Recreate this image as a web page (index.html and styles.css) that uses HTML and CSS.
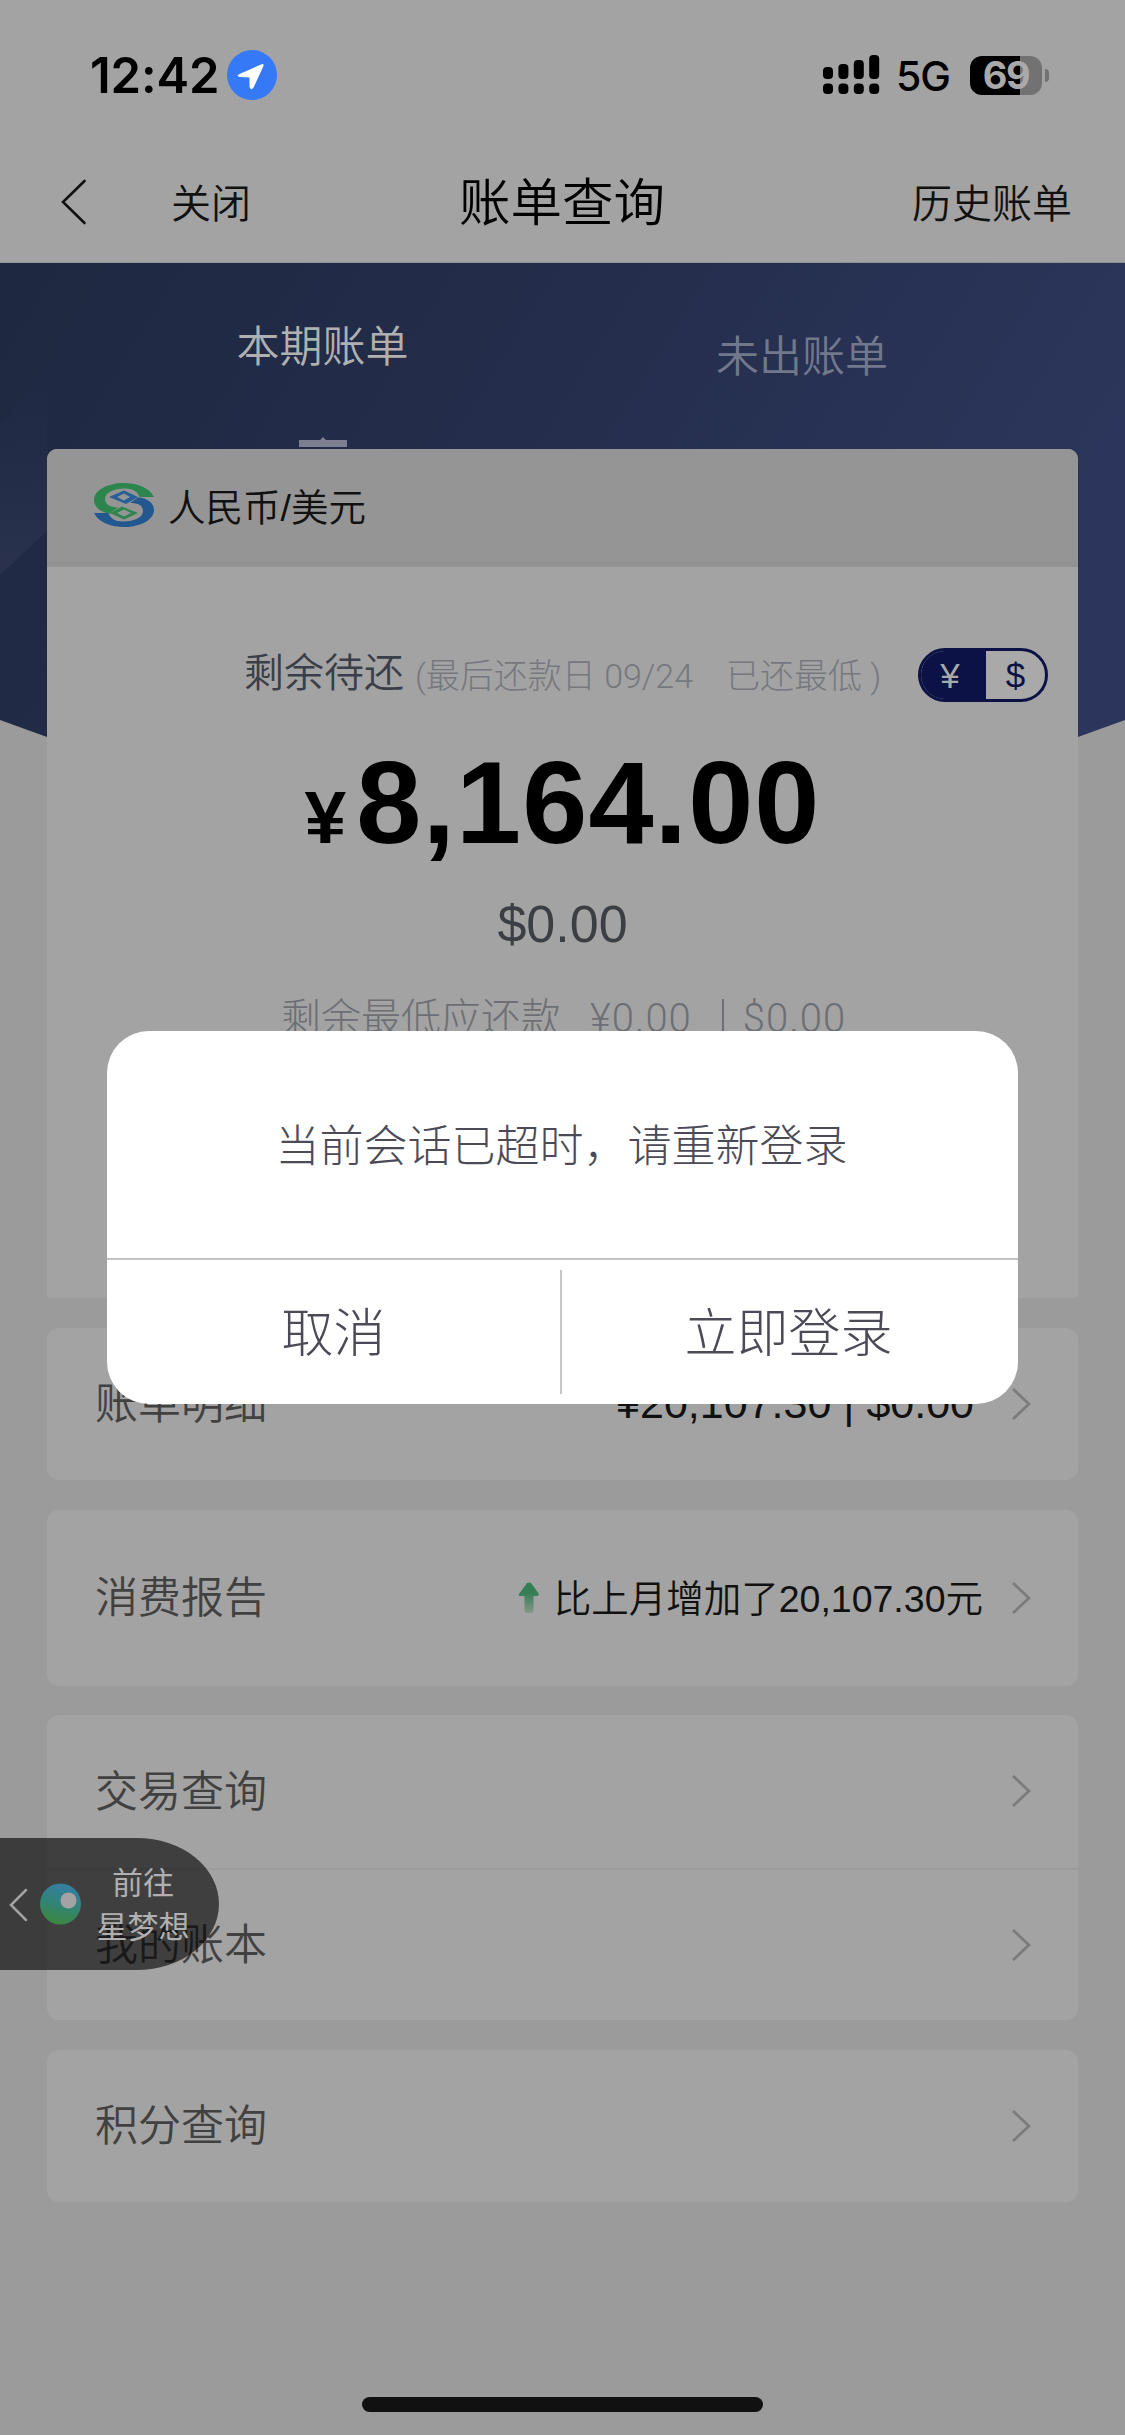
FILE: index.html
```html
<!DOCTYPE html>
<html lang="zh-CN">
<head>
<meta charset="utf-8">
<title>账单查询</title>
<link rel="stylesheet" href="styles.css">
</head>
<body>
<div class="screen">
  <div class="statusbar">
    <span class="time">12:42</span>
    <svg class="location" width="50" height="50" viewBox="0 0 50 50"><circle cx="25" cy="25" r="25" fill="#3579f6"/><path d="M12.5 24 34 14.500Q37.500 13 36.300 16.500L26.500 37.500Q24 41 22.500 37L22.500 27.500 13 27Q8.500 26 12.500 24Z" fill="#fff"/></svg>
    <svg class="signal" width="57" height="40" viewBox="0 0 57 40"><g fill="#000"><rect x="0" y="12" width="10" height="12" rx="4"/><rect x="15.400" y="9" width="10" height="15" rx="4"/><rect x="30.800" y="5" width="10" height="19" rx="4"/><rect x="46.200" y="0" width="10" height="24" rx="4"/><rect x="0" y="28.500" width="10" height="10.500" rx="4"/><rect x="15.400" y="28.500" width="10" height="10.500" rx="4"/><rect x="30.800" y="28.500" width="10" height="10.500" rx="4"/><rect x="46.200" y="28.500" width="10" height="10.500" rx="4"/></g></svg>
    <span class="network">5G</span>
    <div class="battery"><span>69</span></div><i class="battery-tip"></i>
  </div>
  <div class="navbar">
    <svg class="back" width="26" height="46" viewBox="0 0 26 46"><path d="M23.500 2 2 23 23.500 44" fill="none" stroke="#111" stroke-width="2.600" stroke-linecap="round"/></svg>
    <span class="close">关闭</span>
    <h1>账单查询</h1>
    <span class="history">历史账单</span>
  </div>
  <div class="content">
    <svg class="hero" width="1125" height="520" viewBox="0 0 1125 520" preserveAspectRatio="none">
      <defs><linearGradient id="heroFill" x1="0" y1="0" x2="1" y2=".3"><stop offset="0" stop-color="#1e2840"/><stop offset=".5" stop-color="#242d4b"/><stop offset="1" stop-color="#2c365c"/></linearGradient>
      <linearGradient id="facet" x1="0" y1="0" x2="0" y2="1"><stop offset="0" stop-color="#262f4a" stop-opacity="0"/><stop offset="1" stop-color="#2a324e"/></linearGradient></defs>
      <path d="M0 0H1125V457L1078 474Q562 620 47 474L0 457Z" fill="url(#heroFill)"/>
      <path d="M0 160 47 110V268L0 312Z" fill="url(#facet)"/>
    </svg>
    <div class="tabs">
      <div class="tab active">本期账单<svg width="48" height="10" viewBox="0 0 48 10"><path d="M0 3H21L24 0 27 3H48V10H0Z" fill="#7b7f8f"/></svg></div>
      <div class="tab">未出账单</div>
    </div>
    <div class="cards">
      <section class="card bill">
        <header>
          <svg width="60" height="44" viewBox="0 0 60 44">
            <path d="M60 14C55 4 42 0 30 0 12 0 0 8 0 17 0 26 10 31 21 31L16 30 24 24.500C15 24 11 21 11 16 11 10 19 5.500 31 5.500 40 5.500 43 9 46 14Z" fill="#2c854d"/>
            <path d="M0 30C5 40 18 44 30 44 48 44 60 36 60 27 60 18 50 14 40 14L44 14.500 36 20C45 20 49 23 49 28 49 34 41 38.500 29 38.500 20 38.500 17 35 14 30Z" fill="#22578f"/>
            <path d="M15 14 30 7.500 44 14 32 21ZM23 14 30 17.500 36 14 30 10.500Z" fill="#285f98" fill-rule="evenodd"/>
            <path d="M16 30 28 23.500 44 30 30 36.500ZM23 30 30 33.500 37 30 30 26.500Z" fill="#2c854d" fill-rule="evenodd"/>
          </svg>
          <span>人民币/美元</span>
        </header>
        <div class="due">
          <span class="due-label">剩余待还</span>
          <span class="due-note">(最后还款日 09/24</span>
          <span class="due-state">已还最低 )</span>
          <div class="currency"><b>¥</b><b>$</b></div>
        </div>
        <div class="amount"><small>¥</small>8,164.00</div>
        <div class="usd">$0.00</div>
        <div class="minimum"><span>剩余最低应还款</span><span>¥0.00</span><i></i><span>$0.00</span></div>
      </section>
      <section class="card detail"><div class="row"><span>账单明细</span><em>¥20,107.30 | $0.00</em><svg class="arrow" width="20" height="32" viewBox="0 0 20 32"><path d="M2 1 18 16 2 31"/></svg></div></section>
      <section class="card report"><div class="row"><span>消费报告</span><svg class="up" width="22" height="32" viewBox="0 0 22 32"><defs><linearGradient id="upFill" x1="0" y1="0" x2="0" y2="1"><stop offset=".35" stop-color="#367e55"/><stop offset="1" stop-color="#83988a"/></linearGradient></defs><path d="M9 1Q11 0 13 1L21 12Q21 14 19 14H15.500V29Q15 31 13 31H9Q7 31 6.500 29V14H2Q0 14 1 12Z" fill="url(#upFill)"/></svg><em>比上月增加了20,107.30元</em><svg class="arrow" width="20" height="32" viewBox="0 0 20 32"><path d="M2 1 18 16 2 31"/></svg></div></section>
      <section class="card">
        <div class="row"><span>交易查询</span><svg class="arrow" width="20" height="32" viewBox="0 0 20 32"><path d="M2 1 18 16 2 31"/></svg></div>
        <div class="row"><span>我的账本</span><svg class="arrow" width="20" height="32" viewBox="0 0 20 32"><path d="M2 1 18 16 2 31"/></svg></div>
      </section>
      <section class="card"><div class="row"><span>积分查询</span><svg class="arrow" width="20" height="32" viewBox="0 0 20 32"><path d="M2 1 18 16 2 31"/></svg></div></section>
    </div>
  </div>
  <div class="floating">
    <svg width="82" height="50" viewBox="0 0 82 50"><defs><linearGradient id="ball" x1=".6" y1="0" x2=".35" y2="1"><stop offset=".1" stop-color="#357f9e"/><stop offset=".5" stop-color="#318477"/><stop offset="1" stop-color="#3d873c"/></linearGradient></defs><path d="M26 11 11 26 26 41" fill="none" stroke="#a3a3a3" stroke-width="2.500" stroke-linecap="round"/><circle cx="60.500" cy="25" r="20.500" fill="url(#ball)"/><circle cx="68.500" cy="21.500" r="8" fill="#a3a3a3"/></svg>
    <p>前往<br>星梦想</p>
  </div>
  <div class="dialog">
    <p>当前会话已超时，请重新登录</p>
    <div class="actions"><button>取消</button><i></i><button>立即登录</button></div>
  </div>
  <div class="home"></div>
</div>
</body>
</html>
```

FILE: styles.css
```css
* { box-sizing: border-box; }
body { margin: 0; background: #9b9b9b; }
.screen {
  position: relative; width: 1125px; height: 2435px; overflow: hidden;
  background: #9b9b9b; color: #111; line-height: 1;
  font-family: "Liberation Sans", "Noto Sans CJK SC DemiLight", "Noto Sans CJK SC", sans-serif;
  font-weight: 350; white-space: nowrap;
}
svg { display: block; flex: none; }
p, h1 { margin: 0; }
em { font-style: normal; }
.statusbar {
  display: flex; align-items: center; height: 150px; padding: 0 76px 0 90px;
  background: #a3a3a3; color: #000; font-family: Inter, sans-serif;
}
.time { width: 137px; font-size: 49px; font-weight: 600; letter-spacing: -0.1px; }
.location { margin-right: auto; }
.signal { margin-right: 16px; }
.network { width: 74px; font-size: 41px; font-weight: 450; letter-spacing: -1px; padding-top: 2px; }
.battery {
  width: 72px; height: 39px; border-radius: 12px; text-align: center;
  background: linear-gradient(90deg, #000 50px, #727272 50px);
  color: #a9a9a9; font-size: 38px; font-weight: 700; line-height: 39px; letter-spacing: -1.5px;
}
.battery-tip { width: 4px; height: 13px; margin-left: 3px; border-radius: 0 4px 4px 0; background: #727272; }
.navbar {
  display: grid; grid-template-columns: 110px 280px 222px 1fr; align-items: center;
  height: 113px; padding: 0 53px 8px 61px; background: #a3a3a3; border-bottom: 1px solid #8d9496;
}
.close, .history { padding-top: 3px; font-size: 40px; }
.history { text-align: right; }
h1 { padding-top: 3px; text-align: center; font-size: 51.5px; font-weight: 350; color: #000; }
.content { position: relative; }
.hero { position: absolute; left: 0; top: 0; }
.tabs { position: relative; display: grid; grid-template-columns: 645px 1fr; height: 186px; }
.tab { padding: 73px 166px 0 0; font-size: 43px; color: #71788b; text-align: center; }
.tab.active { padding: 63px 0 0; color: #b0b0b0; }
.tab.active svg { margin: 68px auto 0; }
.cards { position: relative; padding: 0 47px; display: flex; flex-direction: column; gap: 29.5px; }
.card { background: #a3a3a3; border-radius: 12px; overflow: hidden; }
.bill { height: 849px; border-radius: 10px 10px 4px 4px; }
.bill header {
  display: flex; gap: 14px; height: 118px; padding: 34px 47px 0;
  background: #959595; border-bottom: 6px solid #929292; font-size: 37.5px;
}
.bill header span { padding-top: 7px; }
.due {
  display: flex; align-items: center; height: 54px; margin: 81px 30px 0 197px;
  font-size: 34px; font-weight: 300; color: #76787e;
  font-family: Roboto, "Noto Sans CJK SC Light", "Noto Sans CJK SC", sans-serif;
}
.due-label {
  width: 171px; margin-top: -10px; font-size: 40px; font-weight: 350; color: #3a3e48;
  font-family: "Noto Sans CJK SC DemiLight", "Noto Sans CJK SC", sans-serif;
}
.due-note { width: 311px; padding-top: 1px; }
.due-state { padding-top: 1px; }
.currency {
  display: flex; width: 130px; height: 54px; margin-left: auto; border: 3px solid #0c1245;
  border-radius: 27px; overflow: hidden; color: #0c1245; background: #a9a9a9;
  font-family: "Liberation Sans", sans-serif;
}
.currency b { flex: 1; text-align: center; font-size: 35px; font-weight: 400; line-height: 50px; }
.currency b:first-child { flex: none; width: 65px; padding-right: 7px; background: #0c1245; color: #a9a9a9; }
.amount { margin-top: 41px; text-align: center; color: #000; font-size: 117px; font-weight: 700; line-height: 120px; letter-spacing: 1.1px; }
.amount small { font-size: 75px; margin-right: 9px; }
.usd { margin-top: 21px; text-align: center; color: #3b3e43; font-size: 52px; }
.minimum {
  display: flex; margin: 49px 0 0 234px; align-items: center; font-size: 40px; font-weight: 300; color: #6d6f74;
  font-family: Roboto, "Noto Sans CJK SC Light", "Noto Sans CJK SC", sans-serif;
}
.minimum span:nth-child(n+2) { letter-spacing: 1px; }
.minimum span:nth-child(2) { margin-left: 29px; }
.minimum i { width: 2px; height: 40px; margin: 0 19px 0 30px; background: #6d6f74; }
.row {
  display: flex; align-items: center; height: 152.5px; padding: 0 47px 0 48px;
  font-size: 43px; color: #414141;
}
.row + .row { border-top: 2px solid #9b9b9b; }
.row > span { margin-right: auto; padding-top: 2px; }
.row em { color: #111; }
.report .row { height: 176px; }
.report em { font-size: 37.5px; margin-right: 28px; padding-top: 4px; }
.report .up { margin-right: 14px; }
.detail em { margin-right: 37px; }
.arrow { fill: none; stroke: #7b7b7b; stroke-width: 2.8; }
.floating {
  position: absolute; left: 0; top: 1838px; display: flex; align-items: center;
  width: 219px; height: 132px; border-radius: 0 82px 82px 0 / 0 66px 66px 0;
  background: rgba(0, 0, 0, .61); color: #b0b0b0;
}
.floating p { width: 122px; margin-top: -3px; font-family: "Noto Sans CJK SC", sans-serif; font-size: 31px; font-weight: 400; line-height: 44px; text-align: center; }
.dialog {
  position: absolute; left: 107px; top: 1031px; display: flex; flex-direction: column;
  width: 911px; height: 373px; border-radius: 42px; background: #fff; color: #4b4a57; overflow: hidden;
  font-family: "Noto Sans CJK SC Light", "Noto Sans CJK SC", sans-serif; font-weight: 300;
}
.dialog p { height: 229px; padding-right: 2px; text-align: center; font-size: 44px; line-height: 224px; border-bottom: 2px solid #c2c2c2; }
.actions { flex: 1; display: flex; align-items: center; }
.actions i { width: 2px; height: 124px; background: #c8c8c8; }
.actions button { flex: 1 1 0; height: 60px; padding: 0 0 4px; border: 0; background: none; color: inherit; font: inherit; font-size: 52px; line-height: 1; }
.actions button:last-child { padding-right: 3px; }
.home { position: absolute; left: 362px; top: 2397px; width: 401px; height: 15px; border-radius: 8px; background: #111; }
```
